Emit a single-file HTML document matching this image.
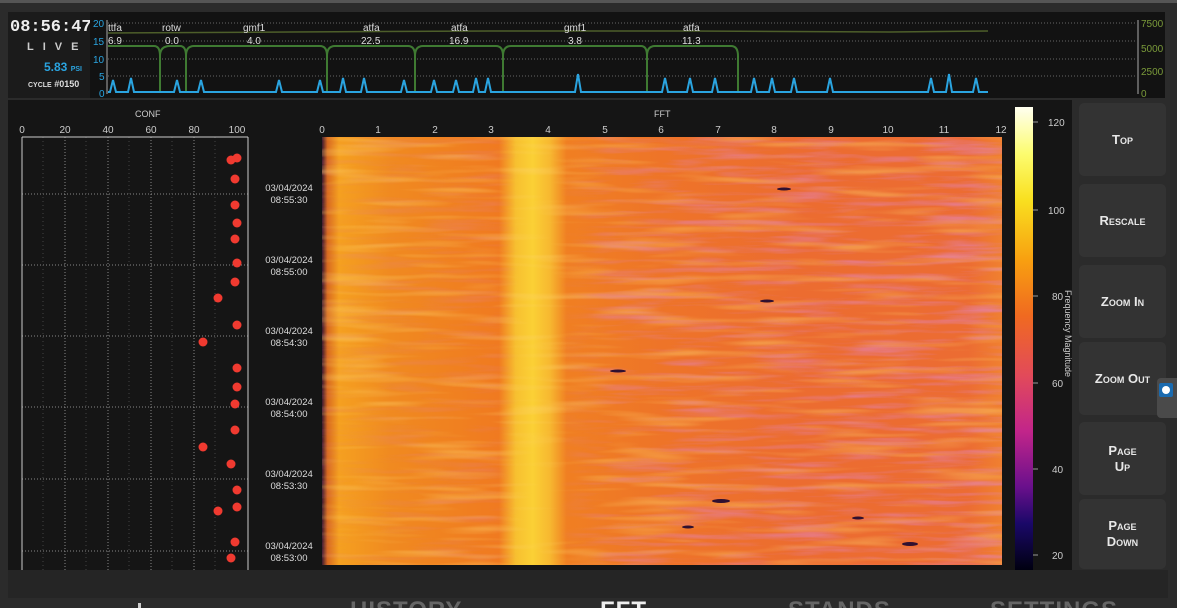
<!DOCTYPE html>
<html><head><style>
*{margin:0;padding:0;box-sizing:border-box}
html,body{width:1177px;height:608px;overflow:hidden}
body{background:#2b2b2b;font-family:"Liberation Sans",sans-serif;position:relative}
.abs{position:absolute}
.btn{position:absolute;left:1079px;width:87px;background:#333;border-radius:5px;color:#e8e8e8;font-weight:bold;text-align:center;display:flex;align-items:center;justify-content:center;line-height:16px;font-variant:small-caps;font-size:13px}
.t{position:absolute;font-size:10px;color:#ccc;white-space:nowrap}
.nav{position:absolute;top:597px;font-size:24px;font-weight:bold;color:#777;letter-spacing:1px}
</style></head><body>
<div class="abs" style="left:0;top:0;width:1177px;height:3px;background:#555"></div>
<div class="abs" style="left:8px;top:12px;width:82px;height:86px;background:#1b1b1b"></div>
<div class="t" style="left:10px;top:18px;font-size:17px;font-family:'Liberation Mono',monospace;color:#eee;font-weight:bold">08:56:47</div>
<div class="t" style="left:27px;top:41px;font-size:11px;color:#ccc;font-weight:bold;letter-spacing:9px">LIVE</div>
<div class="t" style="left:44px;top:60px;font-size:12px;color:#2aa4e0;font-weight:bold">5.83 <span style="font-size:7px">PSI</span></div>
<div class="t" style="left:28px;top:79px;font-size:9px;color:#ddd;font-weight:bold"><span style="font-size:7px">CYCLE</span> #0150</div>
<div class="abs" style="left:90px;top:12px;width:1075px;height:86px;background:#121212"></div>
<svg class="abs" style="left:90px;top:12px" width="1075" height="86">
<g stroke="#666" stroke-dasharray="1,2" stroke-width="1">
<line x1="18" y1="11" x2="1047" y2="11"/><line x1="18" y1="29" x2="1047" y2="29"/><line x1="18" y1="47" x2="1047" y2="47"/><line x1="18" y1="64" x2="1047" y2="64"/></g>
<line x1="17" y1="8" x2="17" y2="82" stroke="#aaa"/><line x1="1048" y1="8" x2="1048" y2="82" stroke="#aaa"/>
<polyline points="18,21 200,20 400,19 600,19 800,20 898,19" stroke="#4d5e2a" fill="none" stroke-width="1.5"/>
<path d="M18,34 H64 Q70,34 70,44 V80 M70,44 Q70,34 80,34 H90 Q96,34 96,44 V80 M96,44 Q96,34 104,34 H230 Q237,34 237,44 V80 M237,44 Q237,34 245,34 H318 Q325,34 325,44 V80 M325,44 Q325,34 333,34 H406 Q413,34 413,44 V80 M413,44 Q413,34 421,34 H551 Q557,34 557,44 V80 M557,44 Q557,34 565,34 H641 Q648,34 648,44 V80" stroke="#3f7a32" fill="none" stroke-width="2"/>
<path d="M18,80 H20 L23,68 L26,80 H38 L41,66 L44,80 H84 L87,68 L90,80 H108 L111,68 L114,80 H186 L189,68 L192,80 H227 L230,68 L233,80 H250 L253,66 L256,80 H271 L274,66 L277,80 H311 L314,68 L317,80 H341 L344,68 L347,80 H363 L366,68 L369,80 H383 L386,66 L389,80 H395 L398,66 L401,80 H485 L488,62 L491,80 H572 L575,66 L578,80 H597 L600,66 L603,80 H622 L625,66 L628,80 H661 L664,66 L667,80 H679 L682,66 L685,80 H701 L704,66 L707,80 H737 L740,66 L743,80 H838 L841,66 L844,80 H856 L859,62 L862,80 H883 L886,66 L889,80 H898" stroke="#2aa4e0" fill="none" stroke-width="2"/>
<g font-size="10" fill="#2aa4e0"><text x="3" y="15">20</text><text x="3" y="33">15</text><text x="3" y="51">10</text><text x="9" y="68">5</text><text x="9" y="85">0</text></g>
<g font-size="10" fill="#7a9a3a"><text x="1051" y="15">7500</text><text x="1051" y="40">5000</text><text x="1051" y="63">2500</text><text x="1051" y="85">0</text></g>
<g font-size="10" fill="#ddd"><text x="18" y="19">ttfa</text><text x="18" y="32">6.9</text><text x="72" y="19">rotw</text><text x="75" y="32">0.0</text><text x="153" y="19">gmf1</text><text x="157" y="32">4.0</text><text x="273" y="19">atfa</text><text x="271" y="32">22.5</text><text x="361" y="19">atfa</text><text x="359" y="32">16.9</text><text x="474" y="19">gmf1</text><text x="478" y="32">3.8</text><text x="593" y="19">atfa</text><text x="592" y="32">11.3</text></g>
</svg>
<div class="abs" style="left:8px;top:100px;width:1064px;height:470px;background:#151515"></div>
<svg class="abs" style="left:8px;top:100px" width="1064" height="470">
<defs>
<linearGradient id="sp" x1="0" x2="1" y1="0" y2="0">
<stop offset="0" stop-color="#3a1830"/><stop offset="0.008" stop-color="#d86a20"/><stop offset="0.025" stop-color="#f5a020"/><stop offset="0.1" stop-color="#f08a20"/><stop offset="0.26" stop-color="#f07a20"/><stop offset="0.285" stop-color="#f7c030"/><stop offset="0.31" stop-color="#fbd035"/><stop offset="0.335" stop-color="#f7b830"/><stop offset="0.36" stop-color="#f07f22"/><stop offset="0.5" stop-color="#ee7428"/><stop offset="0.7" stop-color="#ec6c30"/><stop offset="0.95" stop-color="#ec6c32"/><stop offset="1" stop-color="#f08030"/>
</linearGradient>
<linearGradient id="cb" x1="0" x2="0" y1="0" y2="1">
<stop offset="0" stop-color="#fffff0"/><stop offset="0.1" stop-color="#fcfc70"/><stop offset="0.2" stop-color="#f9e020"/><stop offset="0.33" stop-color="#f8a010"/><stop offset="0.45" stop-color="#f06a20"/><stop offset="0.58" stop-color="#e24a5a"/><stop offset="0.7" stop-color="#c2258a"/><stop offset="0.82" stop-color="#6a108c"/><stop offset="0.9" stop-color="#1a0868"/><stop offset="1" stop-color="#000010"/>
</linearGradient>
<linearGradient id="mk" x1="0" x2="1"><stop offset="0" stop-color="#fff" stop-opacity="0.15"/><stop offset="0.25" stop-color="#fff" stop-opacity="0.25"/><stop offset="0.29" stop-color="#fff" stop-opacity="0"/><stop offset="0.35" stop-color="#fff" stop-opacity="0"/><stop offset="0.42" stop-color="#fff" stop-opacity="0.5"/><stop offset="1" stop-color="#fff" stop-opacity="0.7"/></linearGradient>
<mask id="m"><rect x="314" y="37" width="680" height="428" fill="url(#mk)"/></mask>
<filter id="tb" x="0" y="0" width="100%" height="100%"><feTurbulence type="fractalNoise" baseFrequency="0.012 0.15" numOctaves="3" seed="4"/><feColorMatrix values="0 0 0 0 0.78  0 0 0 0 0.22  0 0 0 0 0.42  2.6 0 0 0 -1.2"/></filter>
<filter id="tb2" x="0" y="0" width="100%" height="100%"><feTurbulence type="fractalNoise" baseFrequency="0.01 0.12" numOctaves="2" seed="9"/><feColorMatrix values="0 0 0 0 0.98  0 0 0 0 0.65  0 0 0 0 0.15  0 0 3 0 -1.5"/></filter>
</defs>
<text x="127" y="17" font-size="9" fill="#ccc">CONF</text>
<text x="646" y="17" font-size="9" fill="#ccc">FFT</text>
<g font-size="10" fill="#ccc" text-anchor="middle"><text x="14" y="33">0</text><text x="57" y="33">20</text><text x="100" y="33">40</text><text x="143" y="33">60</text><text x="186" y="33">80</text><text x="229" y="33">100</text></g>
<g stroke="#888" stroke-dasharray="1,2"><line x1="57" y1="37" x2="57" y2="470"/><line x1="100" y1="37" x2="100" y2="470"/><line x1="143" y1="37" x2="143" y2="470"/><line x1="186" y1="37" x2="186" y2="470"/>
<line x1="14" y1="94" x2="240" y2="94"/><line x1="14" y1="165" x2="240" y2="165"/><line x1="14" y1="236" x2="240" y2="236"/><line x1="14" y1="307" x2="240" y2="307"/><line x1="14" y1="379" x2="240" y2="379"/><line x1="14" y1="451" x2="240" y2="451"/></g>
<g stroke="#444" stroke-dasharray="1,3"><line x1="35" y1="37" x2="35" y2="470"/><line x1="78" y1="37" x2="78" y2="470"/><line x1="121" y1="37" x2="121" y2="470"/><line x1="164" y1="37" x2="164" y2="470"/><line x1="207" y1="37" x2="207" y2="470"/></g>
<line x1="14" y1="37" x2="240" y2="37" stroke="#ccc"/><line x1="14" y1="37" x2="14" y2="470" stroke="#ccc"/><line x1="240" y1="37" x2="240" y2="470" stroke="#ccc"/>
<g fill="#f03a30"><circle cx="223" cy="60" r="4.5"/><circle cx="229" cy="58" r="4.5"/><circle cx="227" cy="79" r="4.5"/><circle cx="227" cy="105" r="4.5"/><circle cx="229" cy="123" r="4.5"/><circle cx="227" cy="139" r="4.5"/><circle cx="229" cy="163" r="4.5"/><circle cx="227" cy="182" r="4.5"/><circle cx="210" cy="198" r="4.5"/><circle cx="229" cy="225" r="4.5"/><circle cx="195" cy="242" r="4.5"/><circle cx="229" cy="268" r="4.5"/><circle cx="229" cy="287" r="4.5"/><circle cx="227" cy="304" r="4.5"/><circle cx="227" cy="330" r="4.5"/><circle cx="195" cy="347" r="4.5"/><circle cx="223" cy="364" r="4.5"/><circle cx="229" cy="390" r="4.5"/><circle cx="229" cy="407" r="4.5"/><circle cx="210" cy="411" r="4.5"/><circle cx="227" cy="442" r="4.5"/><circle cx="223" cy="458" r="4.5"/></g>
<g font-size="9.5" fill="#ddd" text-anchor="middle">
<text x="281" y="91">03/04/2024</text><text x="281" y="103">08:55:30</text>
<text x="281" y="163">03/04/2024</text><text x="281" y="175">08:55:00</text>
<text x="281" y="234">03/04/2024</text><text x="281" y="246">08:54:30</text>
<text x="281" y="305">03/04/2024</text><text x="281" y="317">08:54:00</text>
<text x="281" y="377">03/04/2024</text><text x="281" y="389">08:53:30</text>
<text x="281" y="449">03/04/2024</text><text x="281" y="461">08:53:00</text></g>
<g font-size="10" fill="#ccc" text-anchor="middle"><text x="314" y="33">0</text><text x="370" y="33">1</text><text x="427" y="33">2</text><text x="483" y="33">3</text><text x="540" y="33">4</text><text x="597" y="33">5</text><text x="653" y="33">6</text><text x="710" y="33">7</text><text x="766" y="33">8</text><text x="823" y="33">9</text><text x="880" y="33">10</text><text x="936" y="33">11</text><text x="993" y="33">12</text></g>
<rect x="314" y="37" width="680" height="428" fill="url(#sp)"/>
<rect x="314" y="37" width="680" height="428" filter="url(#tb2)" opacity="0.4"/>
<g mask="url(#m)"><rect x="314" y="37" width="680" height="428" filter="url(#tb)"/></g>
<g fill="#301030"><ellipse cx="776" cy="89" rx="7" ry="1.5"/><ellipse cx="759" cy="201" rx="7" ry="1.5"/><ellipse cx="610" cy="271" rx="8" ry="1.5"/><ellipse cx="713" cy="401" rx="9" ry="2"/><ellipse cx="902" cy="444" rx="8" ry="2"/><ellipse cx="850" cy="418" rx="6" ry="1.5"/><ellipse cx="680" cy="427" rx="6" ry="1.5"/></g>
<rect x="1007" y="7" width="18" height="463" fill="url(#cb)"/>
<g font-size="10" fill="#ccc"><text x="1040" y="26">120</text><text x="1040" y="114">100</text><text x="1044" y="200">80</text><text x="1044" y="287">60</text><text x="1044" y="373">40</text><text x="1044" y="459">20</text></g>
<g stroke="#999"><line x1="1025" y1="22" x2="1030" y2="22"/><line x1="1025" y1="110" x2="1030" y2="110"/><line x1="1025" y1="196" x2="1030" y2="196"/><line x1="1025" y1="283" x2="1030" y2="283"/><line x1="1025" y1="369" x2="1030" y2="369"/><line x1="1025" y1="455" x2="1030" y2="455"/></g>
<text x="0" y="0" font-size="9" fill="#ccc" transform="translate(1057,190) rotate(90)">Frequency Magnitude</text>
</svg>
<div class="btn" style="top:103px;height:73px">Top</div>
<div class="btn" style="top:184px;height:73px">Rescale</div>
<div class="btn" style="top:265px;height:73px">Zoom In</div>
<div class="btn" style="top:342px;height:73px">Zoom Out</div>
<div class="btn" style="top:422px;height:73px">Page<br>Up</div>
<div class="btn" style="top:499px;height:70px">Page<br>Down</div>
<div class="abs" style="left:1157px;top:378px;width:20px;height:40px;background:#4a4a4a;border-radius:4px 0 0 4px"></div>
<div class="abs" style="left:1159px;top:383px;width:14px;height:14px;background:#1a6bb0;border-radius:2px"><div style="margin:3px;width:8px;height:8px;border-radius:50%;background:#fff"></div></div>
<div class="abs" style="left:8px;top:570px;width:1160px;height:28px;background:#252525"></div>
<div class="nav" style="left:350px;color:#666">HISTORY</div>
<div class="nav" style="left:600px;color:#eee">FFT</div>
<div class="nav" style="left:788px;color:#666">STANDS</div>
<div class="nav" style="left:990px;color:#666">SETTINGS</div>
<div class="abs" style="left:138px;top:603px;width:3px;height:5px;background:#ccc"></div>
</body></html>
